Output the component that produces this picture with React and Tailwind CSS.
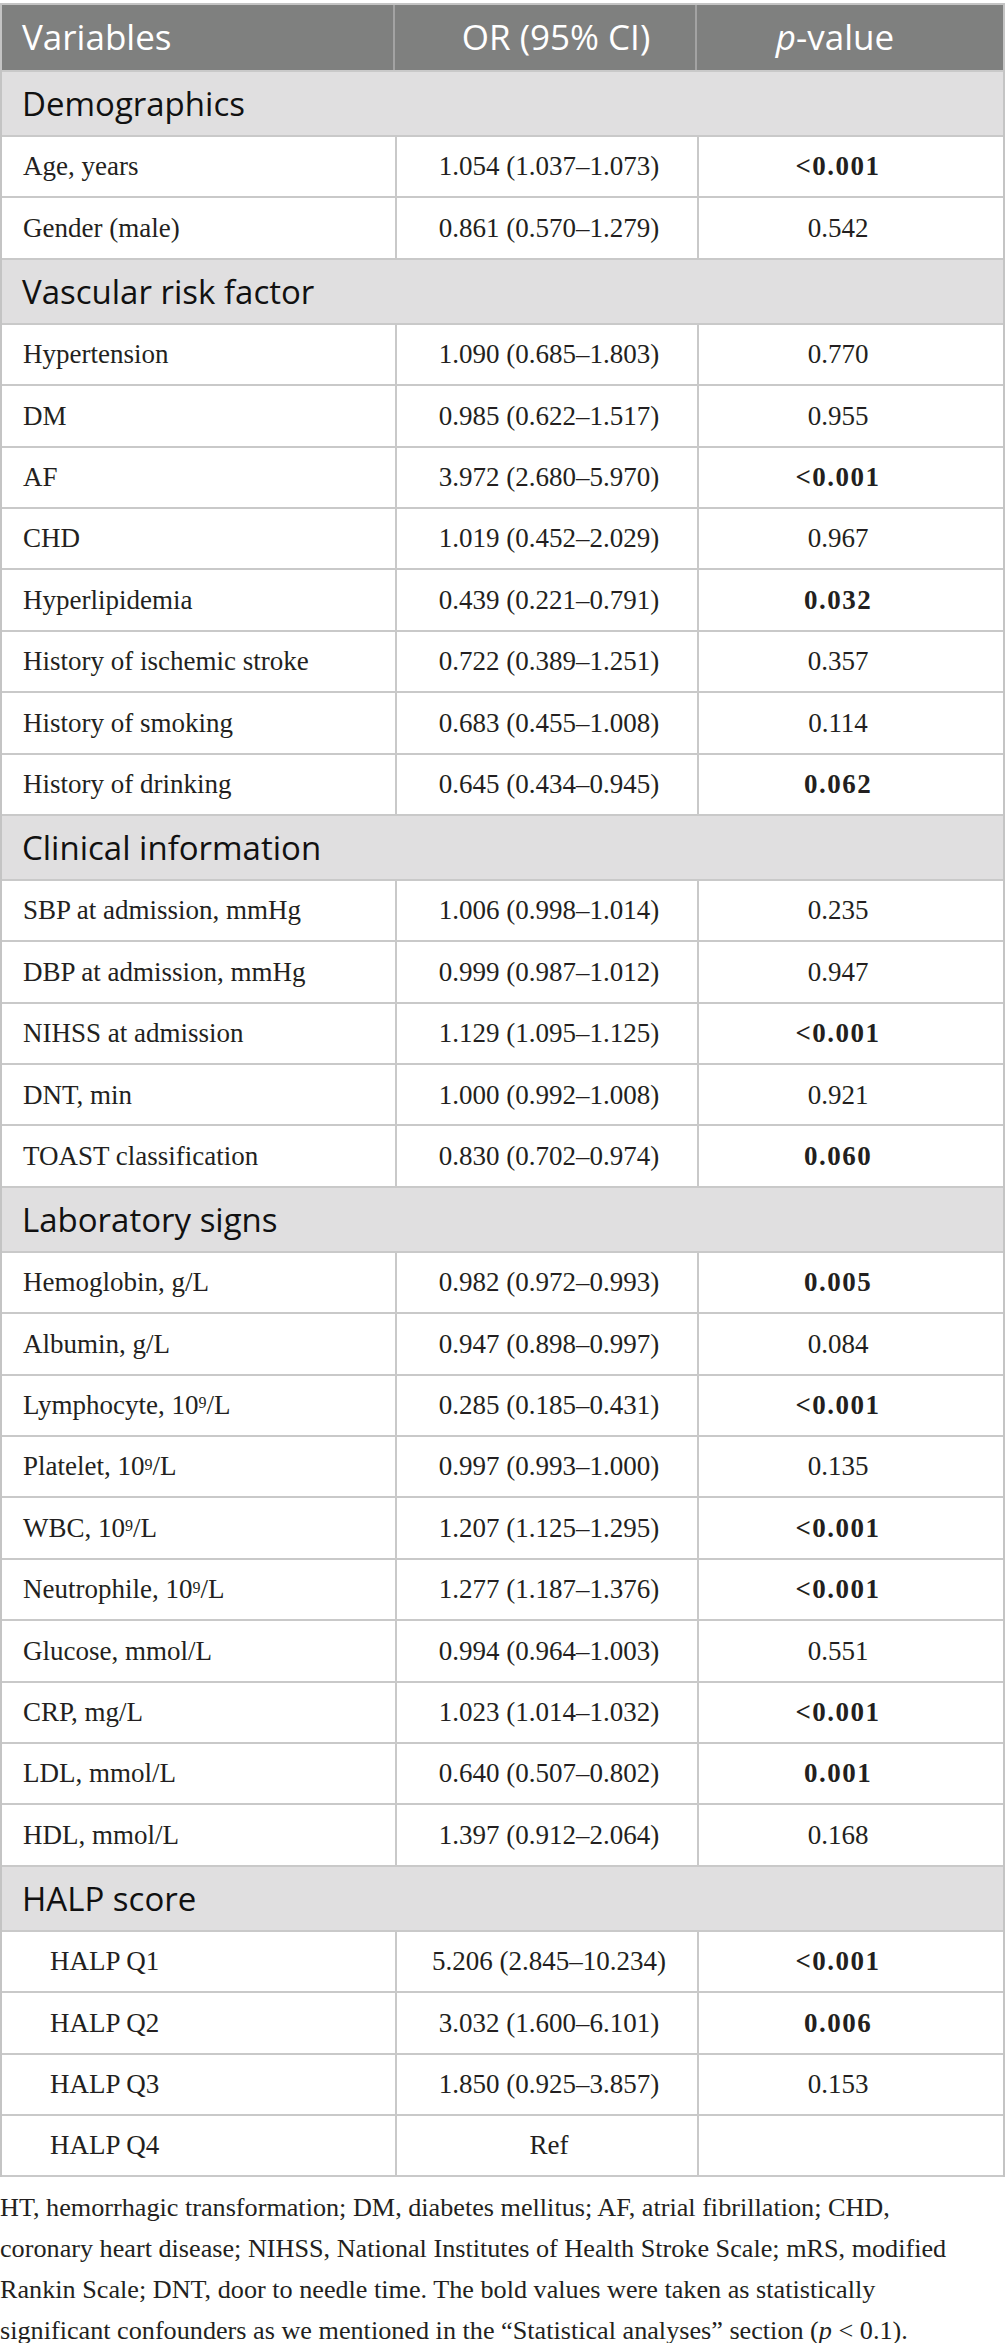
import React from "react";

const serif = "font-['Liberation_Serif','Times_New_Roman',serif]";
const sans = "font-['Open_Sans','Noto_Sans',sans-serif]";

const sections = [
  {
    title: "Demographics",
    rows: [
      ["Age, years", "1.054 (1.037–1.073)", "<0.001", true],
      ["Gender (male)", "0.861 (0.570–1.279)", "0.542", false],
    ],
  },
  {
    title: "Vascular risk factor",
    rows: [
      ["Hypertension", "1.090 (0.685–1.803)", "0.770", false],
      ["DM", "0.985 (0.622–1.517)", "0.955", false],
      ["AF", "3.972 (2.680–5.970)", "<0.001", true],
      ["CHD", "1.019 (0.452–2.029)", "0.967", false],
      ["Hyperlipidemia", "0.439 (0.221–0.791)", "0.032", true],
      ["History of ischemic stroke", "0.722 (0.389–1.251)", "0.357", false],
      ["History of smoking", "0.683 (0.455–1.008)", "0.114", false],
      ["History of drinking", "0.645 (0.434–0.945)", "0.062", true],
    ],
  },
  {
    title: "Clinical information",
    rows: [
      ["SBP at admission, mmHg", "1.006 (0.998–1.014)", "0.235", false],
      ["DBP at admission, mmHg", "0.999 (0.987–1.012)", "0.947", false],
      ["NIHSS at admission", "1.129 (1.095–1.125)", "<0.001", true],
      ["DNT, min", "1.000 (0.992–1.008)", "0.921", false],
      ["TOAST classification", "0.830 (0.702–0.974)", "0.060", true],
    ],
  },
  {
    title: "Laboratory signs",
    rows: [
      ["Hemoglobin, g/L", "0.982 (0.972–0.993)", "0.005", true],
      ["Albumin, g/L", "0.947 (0.898–0.997)", "0.084", false],
      ["Lymphocyte, 10^9/L", "0.285 (0.185–0.431)", "<0.001", true],
      ["Platelet, 10^9/L", "0.997 (0.993–1.000)", "0.135", false],
      ["WBC, 10^9/L", "1.207 (1.125–1.295)", "<0.001", true],
      ["Neutrophile, 10^9/L", "1.277 (1.187–1.376)", "<0.001", true],
      ["Glucose, mmol/L", "0.994 (0.964–1.003)", "0.551", false],
      ["CRP, mg/L", "1.023 (1.014–1.032)", "<0.001", true],
      ["LDL, mmol/L", "0.640 (0.507–0.802)", "0.001", true],
      ["HDL, mmol/L", "1.397 (0.912–2.064)", "0.168", false],
    ],
  },
  {
    title: "HALP score",
    indent: true,
    rows: [
      ["HALP Q1", "5.206 (2.845–10.234)", "<0.001", true],
      ["HALP Q2", "3.032 (1.600–6.101)", "0.006", true],
      ["HALP Q3", "1.850 (0.925–3.857)", "0.153", false],
      ["HALP Q4", "Ref", "", false],
    ],
  },
];

function Label({ text }) {
  // "10^9" -> 10 with superscript 9
  if (!text.includes("^")) return text;
  const [pre, rest] = text.split("^");
  return (
    <>
      {pre}
      <sup className="text-[16px] relative -top-[2px]">{rest[0]}</sup>
      {rest.slice(1)}
    </>
  );
}

function DataRow({ row, indent }) {
  const [label, or, p, bold] = row;
  return (
    <div className={`grid grid-cols-[395px_302px_1fr] h-[61.4px] border-b-2 border-[#c9c9c9] ${serif} text-[27px] text-[#231f20]`}>
      <div className={`flex items-center border-r-2 border-[#c9c9c9] ${indent ? "pl-[48px]" : "pl-[21px]"}`}>
        <Label text={label} />
      </div>
      <div className="flex items-center justify-center border-r-2 border-[#c9c9c9] pl-[4px]">{or}</div>
      <div className={`flex items-center justify-center pr-[26px] ${bold ? "font-bold tracking-[1.5px]" : ""}`}>{p}</div>
    </div>
  );
}

export default function App() {
  return (
    <div className="w-[1005px] bg-white pt-[3px]">
      <div className="border-x-2 border-t-2 border-[#c4c4c4]">
        {/* Header */}
        <div className={`grid grid-cols-[393px_302px_1fr] h-[67px] bg-[#7f807f] text-white ${sans} text-[35px] border-b-2 border-[#c9c9c9]`}>
          <div className="flex items-center pl-[20px] border-r-2 border-[#a3a3a3]">Variables</div>
          <div className="flex items-center justify-center border-r-2 border-[#a3a3a3] pl-[22px]">OR (95% CI)</div>
          <div className="flex items-center justify-center pr-[30px]">
            <span className="italic">p</span>-value
          </div>
        </div>

        {sections.map((s) => (
          <div key={s.title}>
            <div className={`flex items-center h-[65px] bg-[#e0dfe0] border-b-2 border-[#c9c9c9] pl-[20px] ${sans} text-[33px] text-[#111]`}>
              {s.title}
            </div>
            {s.rows.map((r) => (
              <DataRow key={r[0]} row={r} indent={s.indent} />
            ))}
          </div>
        ))}
      </div>

      {/* Footnote */}
      <p className={`${serif} text-[26.2px] leading-[41px] text-[#231f20] pt-[10px]`}>
        HT, hemorrhagic transformation; DM, diabetes mellitus; AF, atrial fibrillation; CHD,
        <br />
        coronary heart disease; NIHSS, National Institutes of Health Stroke Scale; mRS, modified
        <br />
        Rankin Scale; DNT, door to needle time. The bold values were taken as statistically
        <br />
        significant confounders as we mentioned in the “Statistical analyses” section (<span className="italic">p</span> &lt; 0.1).
      </p>
    </div>
  );
}
